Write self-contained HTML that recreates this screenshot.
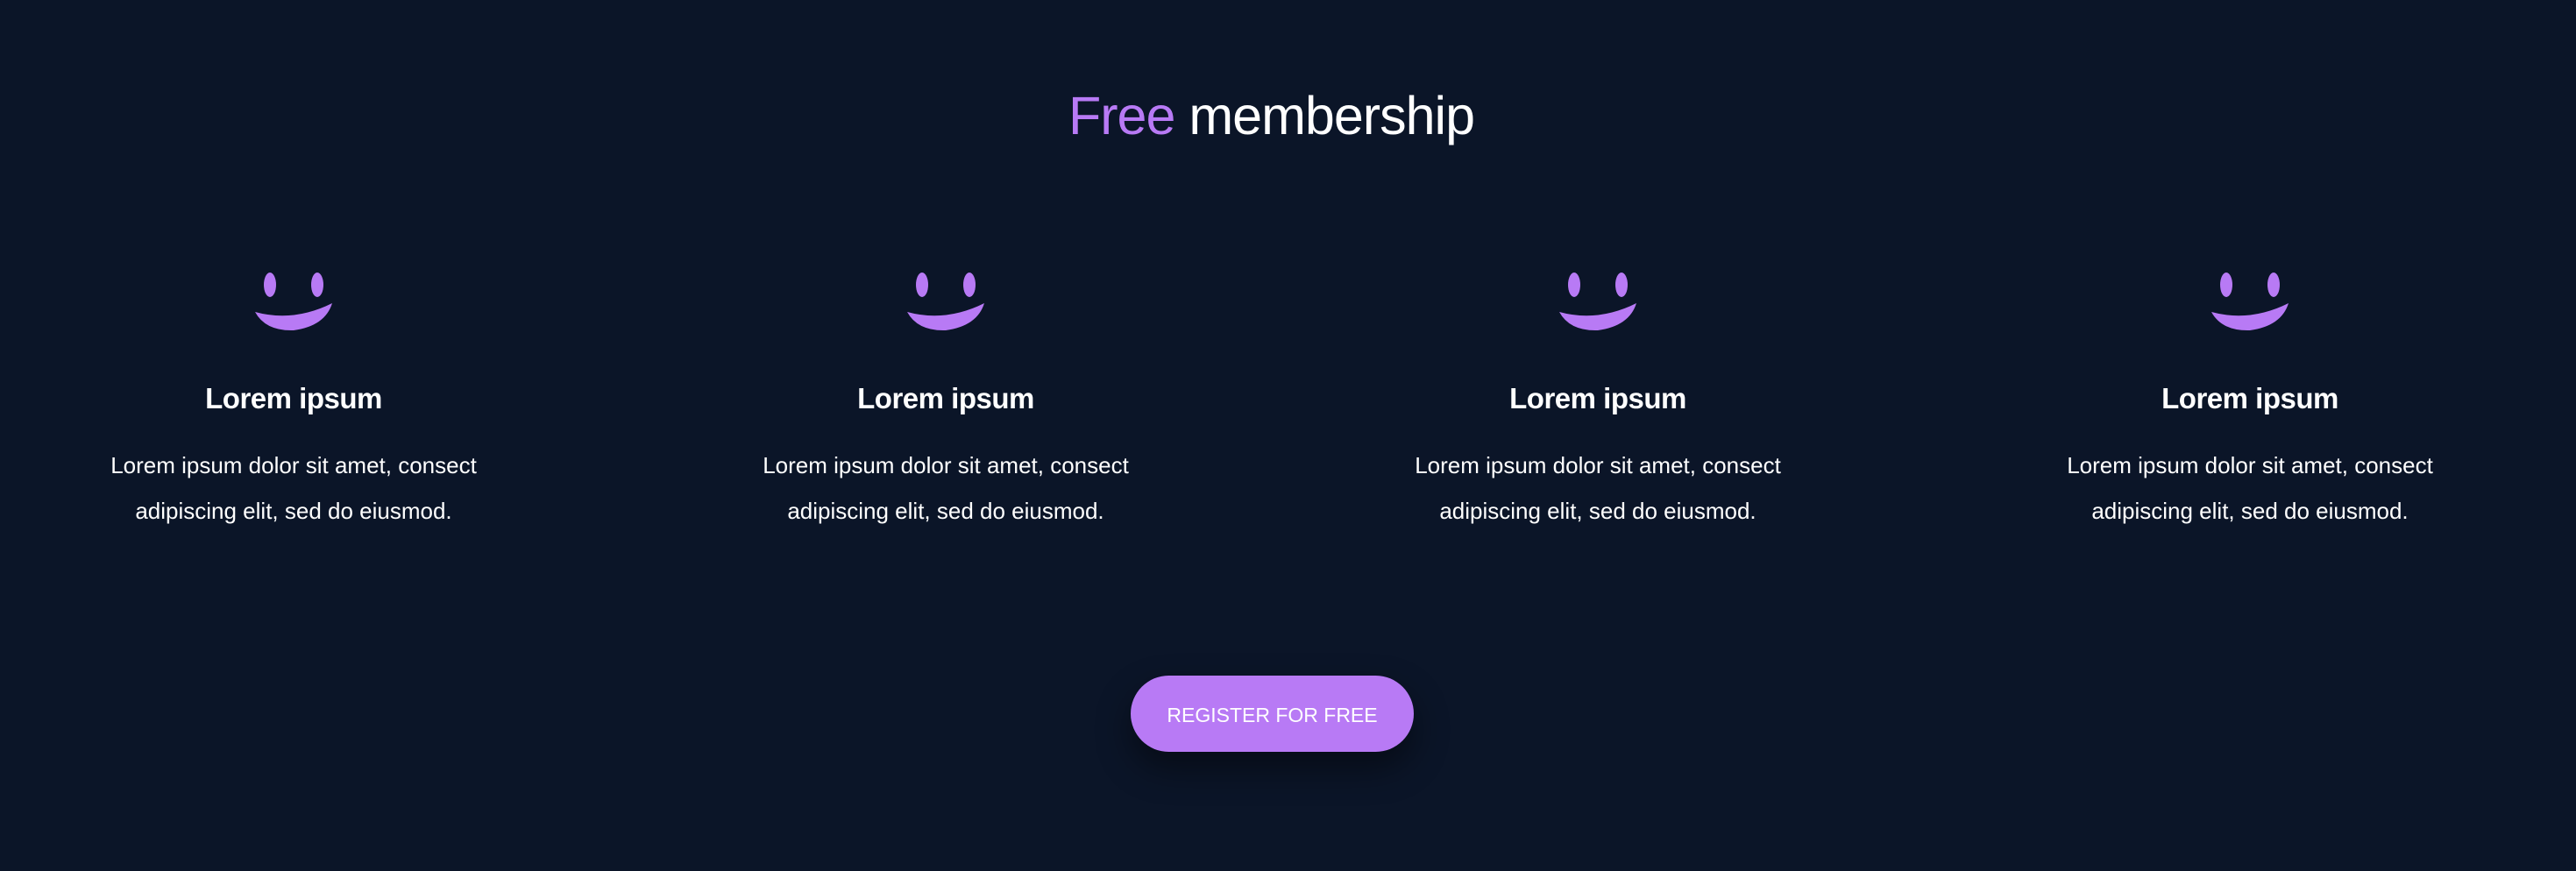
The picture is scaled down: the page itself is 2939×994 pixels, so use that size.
<!DOCTYPE html>
<html><head><meta charset="utf-8"><style>
html,body{margin:0;padding:0}
body{width:2939px;height:994px;background:#0b1528;position:relative;overflow:hidden;font-family:"Liberation Sans",sans-serif;color:#fff}
.title{position:absolute;top:97px;left:-19px;width:2939px;text-align:center;font-size:61px;letter-spacing:-1px}
.title span{color:#b87af5}
.col{position:absolute;top:300px;width:744px;text-align:center}
.col svg{display:block;margin:0 auto}
.col h3{margin:0;position:absolute;top:136px;width:100%;font-size:33px;font-weight:bold;letter-spacing:-0.5px}
.col p{margin:0;position:absolute;top:205px;width:100%;font-size:26px;line-height:52px}
.btn{position:absolute;left:1290px;top:771px;width:323px;height:87px;border-radius:44px;background:#b87af5;color:#fff;font-size:23px;text-align:center;line-height:91px;box-shadow:0 18px 40px rgba(0,0,0,.45)}
</style></head><body>
<div class="title"><span>Free</span> membership</div>

<div class="col" style="left:-37px">
<svg width="100" height="80" viewBox="0 0 100 80"><ellipse cx="23" cy="25" rx="7" ry="14" fill="#b87af5"/><ellipse cx="77" cy="25" rx="7" ry="14" fill="#b87af5"/><path d="M6 56 Q50 68 94 46 Q86 72 50 77 Q18 78 6 56Z" fill="#b87af5"/></svg>
<h3>Lorem ipsum</h3><p>Lorem ipsum dolor sit amet, consect<br>adipiscing elit, sed do eiusmod.</p></div>

<div class="col" style="left:707px">
<svg width="100" height="80" viewBox="0 0 100 80"><ellipse cx="23" cy="25" rx="7" ry="14" fill="#b87af5"/><ellipse cx="77" cy="25" rx="7" ry="14" fill="#b87af5"/><path d="M6 56 Q50 68 94 46 Q86 72 50 77 Q18 78 6 56Z" fill="#b87af5"/></svg>
<h3>Lorem ipsum</h3><p>Lorem ipsum dolor sit amet, consect<br>adipiscing elit, sed do eiusmod.</p></div>

<div class="col" style="left:1451px">
<svg width="100" height="80" viewBox="0 0 100 80"><ellipse cx="23" cy="25" rx="7" ry="14" fill="#b87af5"/><ellipse cx="77" cy="25" rx="7" ry="14" fill="#b87af5"/><path d="M6 56 Q50 68 94 46 Q86 72 50 77 Q18 78 6 56Z" fill="#b87af5"/></svg>
<h3>Lorem ipsum</h3><p>Lorem ipsum dolor sit amet, consect<br>adipiscing elit, sed do eiusmod.</p></div>

<div class="col" style="left:2195px">
<svg width="100" height="80" viewBox="0 0 100 80"><ellipse cx="23" cy="25" rx="7" ry="14" fill="#b87af5"/><ellipse cx="77" cy="25" rx="7" ry="14" fill="#b87af5"/><path d="M6 56 Q50 68 94 46 Q86 72 50 77 Q18 78 6 56Z" fill="#b87af5"/></svg>
<h3>Lorem ipsum</h3><p>Lorem ipsum dolor sit amet, consect<br>adipiscing elit, sed do eiusmod.</p></div>

<div class="btn">REGISTER FOR FREE</div>
</body></html>
